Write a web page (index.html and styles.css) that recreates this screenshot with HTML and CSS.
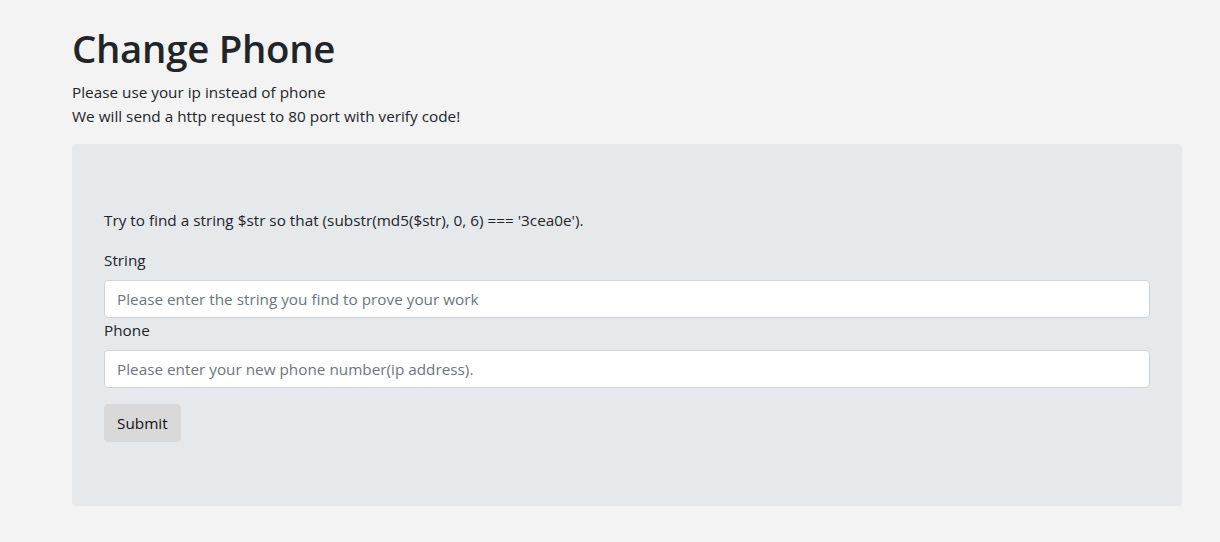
FILE: index.html
```html
<!DOCTYPE html>
<html lang="en">
<head>
<meta charset="utf-8">
<title>Change Phone</title>
<link rel="stylesheet" href="styles.css">
</head>
<body>
<div class="container">
  <h1 class="title">Change Phone</h1>
  <p class="intro">Please use your ip instead of phone<br>We will send a http request to 80 port with verify code!</p>
  <div class="jumbotron">
    <form class="form">
      <p class="task">Try to find a string $str so that (substr(md5($str), 0, 6) === '3cea0e').</p>
      <label class="label" for="s">String</label>
      <input class="input" id="s" type="text" placeholder="Please enter the string you find to prove your work">
      <label class="label" for="p">Phone</label>
      <input class="input" id="p" type="text" placeholder="Please enter your new phone number(ip address).">
      <button class="btn" type="button">Submit</button>
    </form>
  </div>
</div>
</body>
</html>
```
FILE: styles.css
```css
* { box-sizing: border-box; }
html, body { margin: 0; padding: 0; }
body {
  background: #f3f3f3;
  color: #212529;
  font-family: "Open Sans", "Noto Sans", sans-serif;
  font-size: 15.3px;
  line-height: 24px;
}
.container {
  width: 1110px;
  margin: 0 0 0 72px;
  padding-top: 24px;
}
.title {
  margin: 0 0 8px;
  font-size: 38.4px;
  line-height: 48px;
  font-weight: 600;
  letter-spacing: -0.3px;
}
.intro { margin: 0 0 16px; }
.jumbotron {
  background: #e6e9ec;
  border-radius: 4px;
  padding: 64px 32px;
}
.form { display: flex; flex-direction: column; align-items: stretch; }
.task { margin: 0 0 16px; }
.label { display: block; margin-bottom: 8px; }
.input {
  display: block;
  width: 100%;
  height: 38px;
  padding: 6px 12px;
  font: inherit;
  color: #495057;
  background: #fff;
  border: 1px solid #ced4da;
  border-radius: 4px;
}
.input::placeholder { color: #6c757d; opacity: 1; }
.btn {
  align-self: flex-start;
  margin-top: 16px;
  height: 38px;
  padding: 6px 12px;
  font: inherit;
  color: #111;
  background: #d9d9d9;
  border: 1px solid #d9d9d9;
  border-radius: 4px;
}
```
